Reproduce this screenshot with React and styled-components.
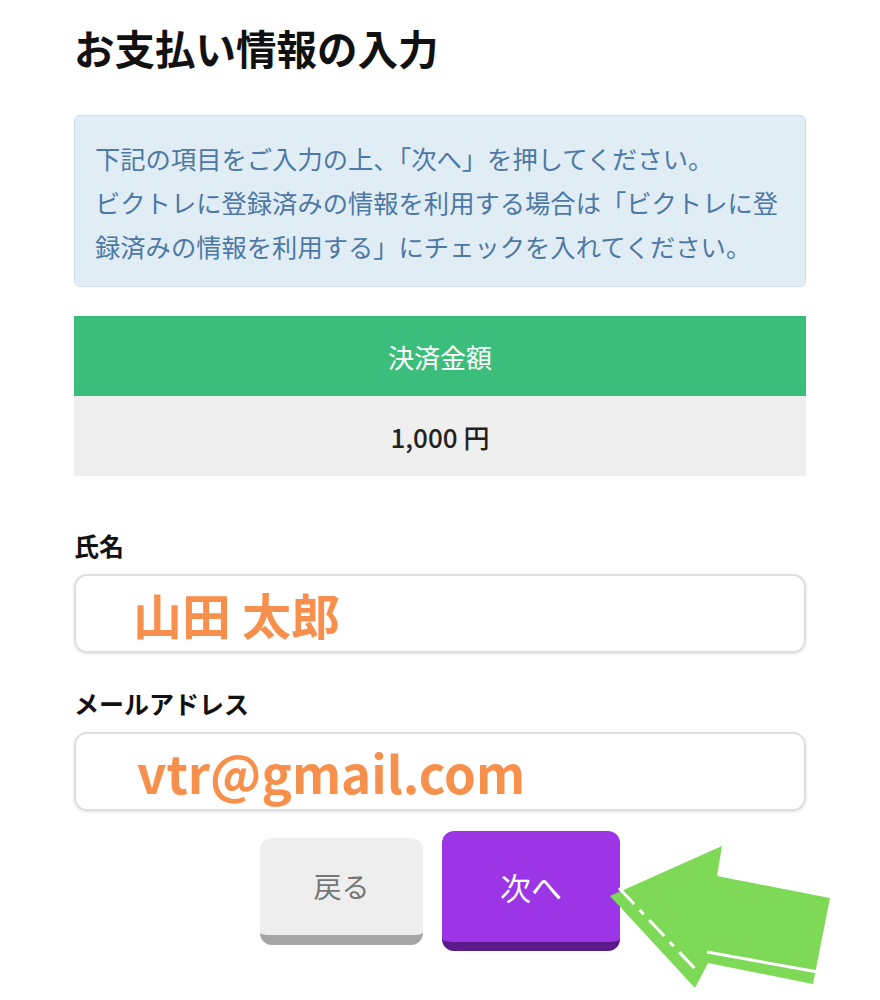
import React from 'react';
import styled, { createGlobalStyle } from 'styled-components';

const GlobalStyle = createGlobalStyle`
  html, body {
    margin: 0;
    padding: 0;
    background: #fff;
    font-family: "Noto Sans CJK JP", "Noto Sans", sans-serif;
  }
`;

const Page = styled.div`
  position: relative;
  width: 880px;
  height: 1000px;
  overflow: hidden;
  box-sizing: border-box;
  padding: 20px 74px 0;
`;

const Title = styled.h1`
  margin: 0;
  font-size: 40.5px;
  line-height: 56px;
  font-weight: 700;
  color: #111;
`;

const Notice = styled.div`
  margin-top: 39px;
  box-sizing: border-box;
  height: 172px;
  padding: 20px 20px;
  background: #e1edf4;
  border: 1px solid #cddfea;
  border-radius: 6px;
  color: #4e78a5;
  font-size: 25.3px;
  line-height: 44px;
  white-space: nowrap;
`;

const Table = styled.div`
  margin-top: 29px;
  display: flex;
  flex-direction: column;
`;

const Cell = styled.div`
  height: 80px;
  display: flex;
  align-items: center;
  justify-content: center;
  font-size: 26px;
  background: ${(p) => (p.head ? '#3bbd7b' : '#efefef')};
  color: ${(p) => (p.head ? '#fff' : '#222')};
  font-weight: ${(p) => (p.head ? 400 : 500)};
`;

const Field = styled.div`
  display: flex;
  flex-direction: column;
  margin-top: ${(p) => p.top}px;
`;

const Label = styled.label`
  font-size: 25px;
  line-height: 30px;
  font-weight: 700;
  color: #111;
  margin-bottom: 14px;
`;

const Input = styled.div`
  height: 79px;
  box-sizing: border-box;
  border: 2px solid #dedede;
  border-radius: 13px;
  box-shadow: 0 1px 3px rgba(0, 0, 0, 0.12);
  display: flex;
  align-items: center;
  padding-left: ${(p) => p.pad}px;
  color: #f7904c;
  font-weight: 700;
  font-size: ${(p) => p.size}px;
  white-space: nowrap;
`;

const Buttons = styled.div`
  margin-top: 20px;
  display: flex;
  align-items: center;
  justify-content: center;
  gap: 19px;
`;

const Button = styled.button`
  box-sizing: border-box;
  width: ${(p) => p.w}px;
  height: ${(p) => p.h}px;
  border: none;
  border-bottom: ${(p) => p.depth}px solid ${(p) => p.shade};
  border-radius: 12px;
  background: ${(p) => p.face};
  color: ${(p) => p.ink};
  font-family: inherit;
  font-size: ${(p) => p.size}px;
  font-weight: 400;
  padding: 0;
  display: flex;
  align-items: center;
  justify-content: center;
`;

const Overlay = styled.svg`
  position: absolute;
  top: 0;
  left: 0;
  pointer-events: none;
`;

const Arrow = () => (
  <Overlay width="880" height="1000" viewBox="0 0 880 1000">
    <polygon
      points="610,896 722,846 717,876 830,898 813,984 708,963 695,988"
      fill="#7ed957"
    />
    <line x1="707" y1="952" x2="818" y2="972" stroke="#fff" strokeWidth="3" />
    <line
      x1="619"
      y1="888"
      x2="698"
      y2="972"
      stroke="#fff"
      strokeWidth="3"
      strokeDasharray="22 8 6 8"
    />
  </Overlay>
);

const App = () => (
  <>
    <GlobalStyle />
    <Page>
      <Title>お支払い情報の入力</Title>
      <Notice>
        下記の項目をご入力の上、「次へ」を押してください。
        <br />
        ビクトレに登録済みの情報を利用する場合は「ビクトレに登
        <br />
        録済みの情報を利用する」にチェックを入れてください。
      </Notice>
      <Table>
        <Cell head>決済金額</Cell>
        <Cell>1,000 円</Cell>
      </Table>
      <Field top={54}>
        <Label>氏名</Label>
        <Input pad={57} size={49}>山田 太郎</Input>
      </Field>
      <Field top={35}>
        <Label>メールアドレス</Label>
        <Input pad={61} size={51}>vtr@gmail.com</Input>
      </Field>
      <Buttons>
        <Button w={163} h={107} depth={10} size={28} face="#eeeeee" shade="#a6a6a6" ink="#777">
          戻る
        </Button>
        <Button w={178} h={120} depth={9} size={31} face="#9b35e5" shade="#5a1a8a" ink="#fff">
          次へ
        </Button>
      </Buttons>
      <Arrow />
    </Page>
  </>
);

export default App;
